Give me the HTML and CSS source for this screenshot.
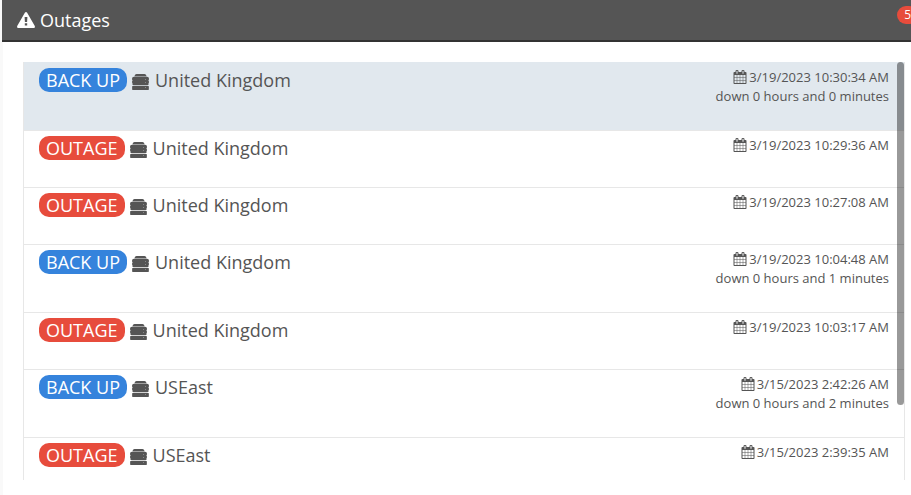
FILE: index.html
```html
<!DOCTYPE html>
<html lang="en">
<head>
    <meta charset="UTF-8">
    <title>Outages</title>
    <meta name="viewport" content="width=device-width, initial-scale=1.0">
    <link rel="stylesheet" href="styles.css">
</head>
<body>

    <!-- Shared icons -->
    <svg class="icon-defs" aria-hidden="true">
        <symbol id="icon-server" viewBox="0 0 17 16">
            <path d="M4.500 0h8q1.500 0 2 2h-12q.5-2 2-2z"/>
            <path d="M2.500 2h12v1h-12z" opacity=".4"/>
            <path d="M2 2.800h13q2 .2 2 2 0 1.200-.6 1.700.6.500.6 1.500t-.6 1.300q.6.700 0 1.500l-.9.400h-14l-.9-.4q-.6-.8 0-1.500Q0 9 0 8t.6-1.500Q0 6 0 4.800q0-1.800 2-2z"/>
            <path d="M1 12h15q1 0 1 1t-.6 1q.6 0 .6 1t-1 1H1q-1 0-1-1t.6-1Q0 14 0 13t1-1z"/>
            <path d="M13 5h1v1h-1zM13 8h1v1h-1zM13 13h1v1h-1z" fill="#888"/>
        </symbol>
        <symbol id="icon-calendar" viewBox="0 0 1664 1792">
            <path d="M128 1664h288v-288h-288v288zm352 0h320v-288h-320v288zm-352-352h288v-320h-288v320zm352 0h320v-320h-320v320zm-352-384h288v-288h-288v288zm736 736h320v-288h-320v288zm-384-736h320v-288h-320v288zm768 736h288v-288h-288v288zm-384-352h320v-320h-320v320zm-352-864v-288q0-13-9.500-22.500t-22.500-9.500h-64q-13 0-22.500 9.500t-9.500 22.500v288q0 13 9.500 22.500t22.500 9.500h64q13 0 22.500-9.500t9.500-22.500zm736 864h288v-320h-288v320zm-384-384h320v-288h-320v288zm384 0h288v-288h-288v288zm32-480v-288q0-13-9.500-22.500t-22.500-9.500h-64q-13 0-22.500 9.500t-9.500 22.500v288q0 13 9.500 22.500t22.500 9.500h64q13 0 22.500-9.500t9.500-22.500zm384-64v1280q0 52-38 90t-90 38h-1408q-52 0-90-38t-38-90v-1280q0-52 38-90t90-38h128v-96q0-66 47-113t113-47h64q66 0 113 47t47 113v96h384v-96q0-66 47-113t113-47h64q66 0 113 47t47 113v96h128q52 0 90 38t38 90z"/>
        </symbol>
    </svg>

    <div class="panel">
        <header class="panel-header">
            <h1>
                <svg class="warning-icon" viewBox="0 0 18 16" aria-hidden="true">
                    <path fill-rule="evenodd" d="M8 .6Q9-.5 10 .6L17.800 14Q18.300 16 16.800 16H1.200Q-.3 16 .2 14zM7.600 5l.3 5h2.200l.3-5zM7.800 11.200v2.200h2.400v-2.200z"/>
                </svg>
                Outages
            </h1>
            <span class="count">5</span>
        </header>

        <main class="panel-body">
            <div class="scroll-area">
                <ul class="outage-list">
                    <li class="outage selected">
                        <div class="location"><span class="status up">BACK UP</span><svg class="server-icon"><use href="#icon-server"/></svg>United Kingdom</div>
                        <div class="details">
                            <p><svg class="calendar-icon"><use href="#icon-calendar"/></svg>3/19/2023 10:30:34 AM</p>
                            <p>down 0 hours and 0 minutes</p>
                        </div>
                    </li>
                    <li class="outage">
                        <div class="location"><span class="status down">OUTAGE</span><svg class="server-icon"><use href="#icon-server"/></svg>United Kingdom</div>
                        <div class="details">
                            <p><svg class="calendar-icon"><use href="#icon-calendar"/></svg>3/19/2023 10:29:36 AM</p>
                        </div>
                    </li>
                    <li class="outage">
                        <div class="location"><span class="status down">OUTAGE</span><svg class="server-icon"><use href="#icon-server"/></svg>United Kingdom</div>
                        <div class="details">
                            <p><svg class="calendar-icon"><use href="#icon-calendar"/></svg>3/19/2023 10:27:08 AM</p>
                        </div>
                    </li>
                    <li class="outage">
                        <div class="location"><span class="status up">BACK UP</span><svg class="server-icon"><use href="#icon-server"/></svg>United Kingdom</div>
                        <div class="details">
                            <p><svg class="calendar-icon"><use href="#icon-calendar"/></svg>3/19/2023 10:04:48 AM</p>
                            <p>down 0 hours and 1 minutes</p>
                        </div>
                    </li>
                    <li class="outage">
                        <div class="location"><span class="status down">OUTAGE</span><svg class="server-icon"><use href="#icon-server"/></svg>United Kingdom</div>
                        <div class="details">
                            <p><svg class="calendar-icon"><use href="#icon-calendar"/></svg>3/19/2023 10:03:17 AM</p>
                        </div>
                    </li>
                    <li class="outage">
                        <div class="location"><span class="status up">BACK UP</span><svg class="server-icon"><use href="#icon-server"/></svg>USEast</div>
                        <div class="details">
                            <p><svg class="calendar-icon"><use href="#icon-calendar"/></svg>3/15/2023 2:42:26 AM</p>
                            <p>down 0 hours and 2 minutes</p>
                        </div>
                    </li>
                    <li class="outage">
                        <div class="location"><span class="status down">OUTAGE</span><svg class="server-icon"><use href="#icon-server"/></svg>USEast</div>
                        <div class="details">
                            <p><svg class="calendar-icon"><use href="#icon-calendar"/></svg>3/15/2023 2:39:35 AM</p>
                        </div>
                    </li>
                </ul>
                <div class="scroll-thumb"></div>
            </div>
        </main>
    </div>

</body>
</html>
```

FILE: styles.css
```css
* {
    box-sizing: border-box;
}

body {
    margin: 0;
    padding-left: 2px;
    background-color: #f9f9f9;
    color: #555;
    font-family: "Open Sans", sans-serif;
    overflow: hidden;
}

.icon-defs {
    display: none;
}

.panel {
    display: flex;
    flex-direction: column;
    height: 100vh;
}

.panel-header {
    display: flex;
    justify-content: space-between;
    align-items: flex-start;
    height: 42px;
    padding-left: 15px;
    background-color: #555;
    border-bottom: 2px solid #333;
    color: white;
    overflow: hidden;
}

.panel-header h1 {
    display: flex;
    align-items: center;
    gap: 5px;
    margin: 0;
    font-size: 18px;
    font-weight: normal;
    line-height: 40px;
}

.warning-icon {
    width: 18px;
    height: 16px;
    fill: white;
}

/* Runs past the right edge of the header */
.count {
    margin: 6px -7px 0 0;
    padding: 0 7px;
    border-radius: 9px;
    background-color: #e74c3c;
    font-size: 12px;
    line-height: 18px;
}

.panel-body {
    flex: 1;
    min-height: 0;
    margin-left: 1px;
    padding: 20px 6px 15px 20px;
    background-color: white;
}

.scroll-area {
    position: relative;
    height: 100%;
    overflow: hidden;
    border: 1px solid #e7e7e7;
    border-width: 0 1px;
}

.outage-list {
    margin: 0;
    padding: 0;
    list-style: none;
}

.outage {
    display: flex;
    justify-content: space-between;
    min-height: 57px;
    padding: 5px 15px 6px;
    border-top: 1px solid #e7e7e7;
}

.outage.selected {
    background-color: #e1e8ee;
    border-top-color: #e1e8ee;
}

.location {
    display: flex;
    align-items: center;
    height: 24px;
    font-size: 18px;
}

.status {
    padding: 0 7px;
    border-radius: 10px;
    color: white;
    line-height: 24px;
}

.status.up {
    background-color: #3583dc;
}

.status.down {
    background-color: #e74c3c;
}

.server-icon {
    width: 17px;
    height: 16px;
    margin: 3px 6px 0 5px;
    fill: #555;
}

.details {
    padding-bottom: 18px;
    font-size: 13px;
    text-align: right;
}

.details p {
    margin: 0;
    line-height: 19px;
}

.calendar-icon {
    width: 14px;
    height: 14px;
    margin-right: 2px;
    vertical-align: -2px;
    fill: #555;
}

.scroll-thumb {
    position: absolute;
    top: 0;
    right: 0;
    width: 7px;
    height: 82%;
    border-radius: 7px;
    background-color: rgba(0, 0, 0, 0.4);
}
```
